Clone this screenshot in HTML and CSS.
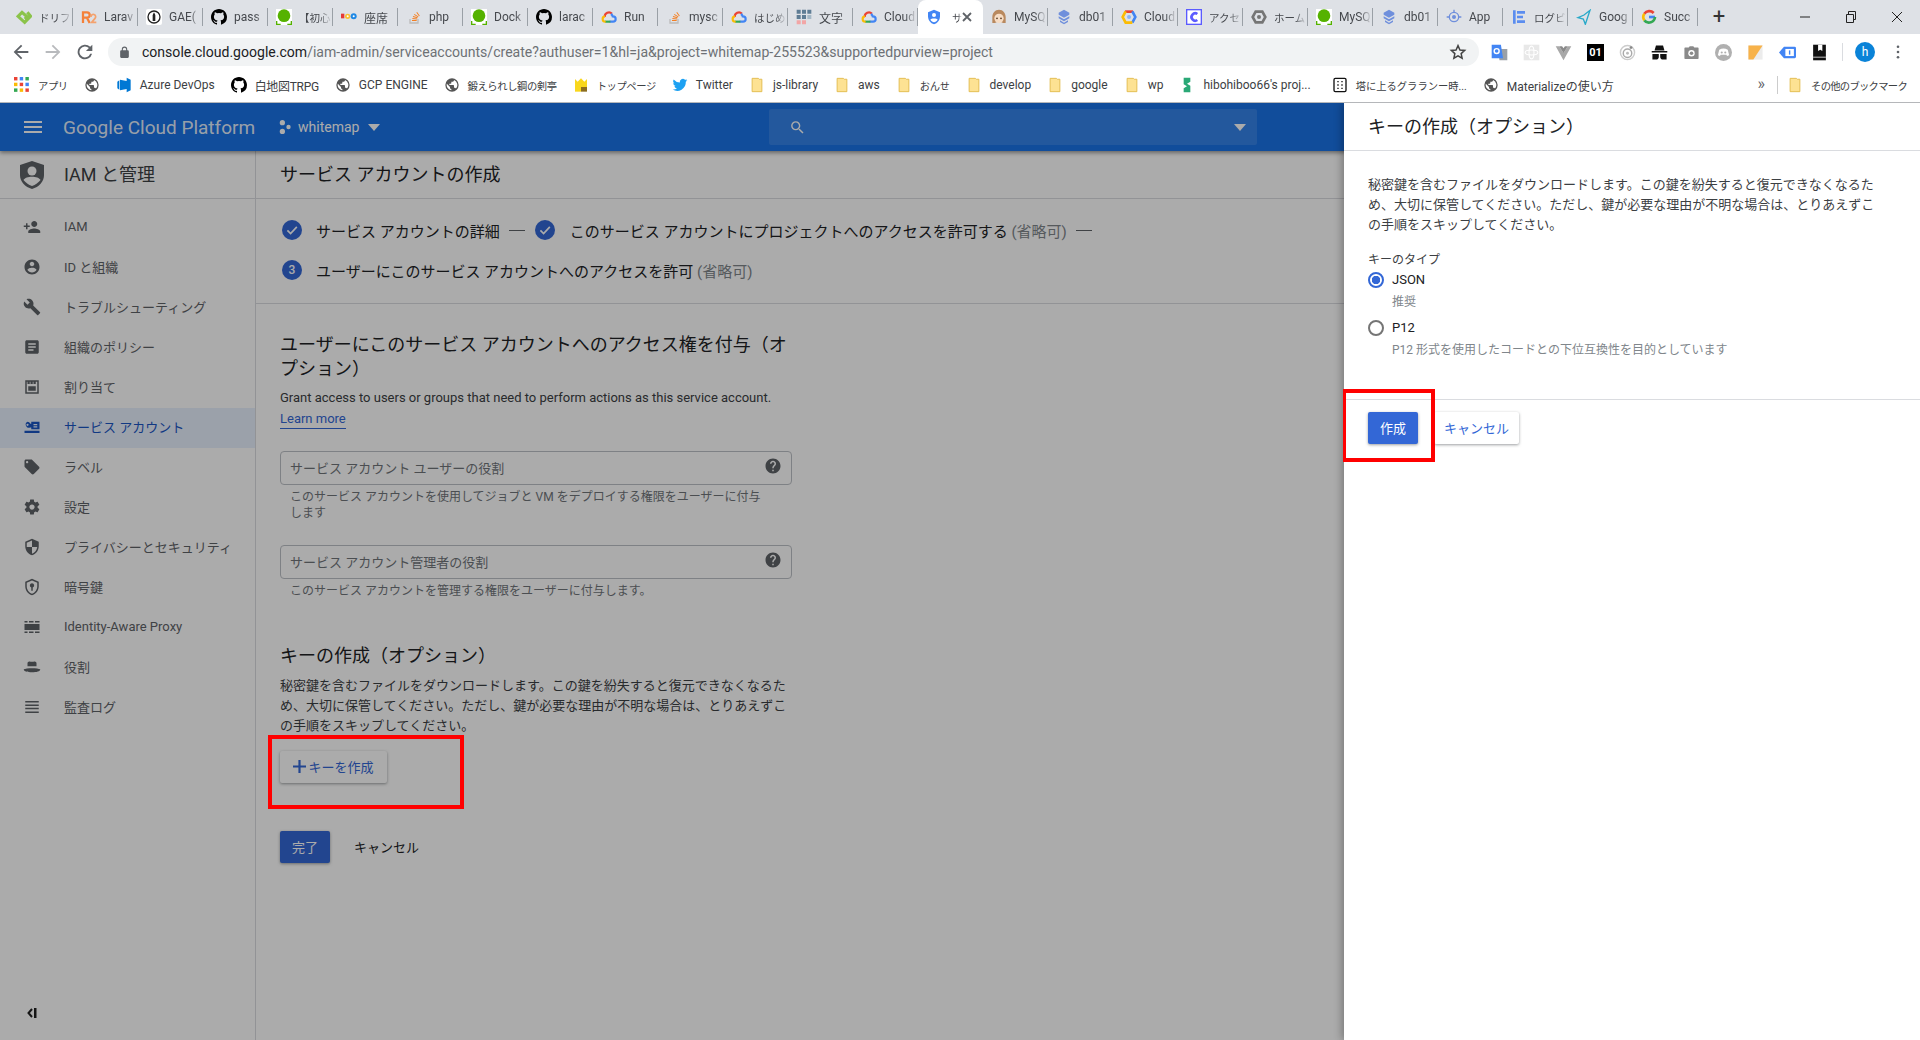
FILE: index.html
```html
<!DOCTYPE html>
<html lang="ja">
<head>
    <meta charset="UTF-8">
    <meta name="viewport" content="width=device-width, initial-scale=1.0">
    <title>サービス アカウントの作成</title>
    <link rel="stylesheet" href="styles.css">
</head>
<body>
    <svg class="defs" width="0" height="0">
        <symbol id="i-globe" viewBox="0 0 24 24"><path d="M12 2a10 10 0 1 0 0 20 10 10 0 0 0 0-20zM11 19.900A8 8 0 0 1 4.200 10.200L9 15v1a2 2 0 0 0 2 2zm6.900-2.500A2 2 0 0 0 16 16h-1v-3a1 1 0 0 0-1-1H8v-2h2a1 1 0 0 0 1-1V7h2a2 2 0 0 0 2-2v-.4a8 8 0 0 1 2.900 12.800z"/></symbol>
        <symbol id="i-github" viewBox="0 0 16 16"><path d="M8 0C3.580 0 0 3.580 0 8c0 3.540 2.290 6.530 5.470 7.590.4.070.55-.17.55-.38v-1.340c-2.230.48-2.700-1.070-2.700-1.070-.36-.92-.89-1.170-.89-1.170-.73-.5.050-.49.050-.49.800.060 1.230.830 1.230.830.710 1.220 1.870.870 2.330.660.070-.520.280-.870.510-1.070-1.780-.200-3.640-.890-3.640-3.950 0-.870.310-1.590.820-2.150-.080-.200-.360-1.020.080-2.120 0 0 .670-.210 2.200.820a7.600 7.600 0 0 1 4 0c1.530-1.040 2.200-.820 2.200-.820.440 1.100.160 1.920.080 2.120.510.560.820 1.270.820 2.150 0 3.070-1.870 3.750-3.650 3.950.290.250.540.730.540 1.480v2.200c0 .210.150.460.550.380A8 8 0 0 0 16 8c0-4.420-3.580-8-8-8z"/></symbol>
        <symbol id="i-cloud" viewBox="0 0 24 24"><g fill="none" stroke-width="3.200"><path stroke="#ea4335" d="M5.500 12A6.500 6.500 0 0 1 16.500 7"/><path stroke="#4285f4" d="M15 7.500A6 6 0 0 1 17.500 11H18a4 4 0 0 1 0 8h-5"/><path stroke="#34a853" d="M14 19H6"/><path stroke="#fbbc05" d="M7 19a4 4 0 0 1-1-8"/></g></symbol>
        <symbol id="i-hex" viewBox="0 0 24 24"><g fill="none" stroke-width="4"><path stroke="#ea4335" d="M6 4h12"/><path stroke="#4285f4" d="M17 3.500L21.500 12 17 20.500"/><path stroke="#fbbc05" d="M7 3.500L2.500 12 7 20.500h10"/></g><circle cx="12" cy="12" r="3" fill="#8ab4f8"/></symbol>
        <symbol id="i-qiita" viewBox="0 0 24 24"><path fill="#fff" d="M0 0h24v24H0z"/><circle cx="12" cy="10" r="9.500" fill="#55b200"/><path fill="#55b200" d="M0 18h2v4h5v2H0zM17 22h5v-4h2v6h-7z"/></symbol>
        <symbol id="i-stack" viewBox="0 0 24 24"><path fill="#bcbbbb" d="M5 15v7h14v-7h-2v5H7v-5z"/><path fill="#f48024" d="M9 18h7v-1.500H9zM9.500 15l7 .6.2-1.500-7-.7zM10.300 12l6.700 1.800.4-1.400-6.700-1.900zM12 8.800l6 3.500.700-1.200-6-3.500zM15.500 5.400l4 5.600 1.200-.8-4-5.600z"/></symbol>
        <symbol id="i-folder" viewBox="0 0 14 18"><path fill="#fde293" stroke="#e0b94a" d="M1.500 1.500h7l1 1h3v14h-11z"/></symbol>
        <symbol id="i-db" viewBox="0 0 24 24"><path fill="#6f8fdc" d="M12 1l8 4.500v3L12 13 4 8.500v-3zM4 11l8 4.500 8-4.500v3l-8 4.500L4 14zM6 17l6 3.500 6-3.500v2.500L12 23l-6-3.500z"/></symbol>
        <symbol id="i-help" viewBox="0 0 24 24"><path d="M12 2C6.480 2 2 6.480 2 12s4.480 10 10 10 10-4.480 10-10S17.520 2 12 2zm1 17h-2v-2h2v2zm2.070-7.750l-.9.920C13.450 12.900 13 13.500 13 15h-2v-.5c0-1.100.450-2.100 1.170-2.830l1.240-1.260c.370-.360.590-.860.590-1.410 0-1.100-.9-2-2-2s-2 .9-2 2H8c0-2.210 1.790-4 4-4s4 1.790 4 4c0 .880-.360 1.680-.930 2.250z"/></symbol>
        <symbol id="i-check" viewBox="0 0 24 24"><circle cx="12" cy="12" r="12" fill="#3367d6"/><path fill="none" stroke="#fff" stroke-width="2" d="M6.500 12.500l3.800 3.800 7.500-8"/></symbol>
    </svg>

    <div class="tab-strip">
        <div class="tab"><svg class="fav" viewBox="0 0 24 24"><path fill="none" stroke="#8bc34a" stroke-width="4.500" d="M17 5l5 6-9 9-10-9 6-6 8 7-4 3"/></svg><span class="tab-ja">ドリフ</span></div>
        <div class="tab"><svg class="fav" viewBox="0 0 24 24"><path fill="none" stroke="#f4813a" stroke-width="3.400" d="M3 21V5h6a4 4 0 0 1 0 8H3m6 0l4 8"/><path fill="none" stroke="#f4a26e" stroke-width="2.600" d="M15 12a3.500 3.500 0 1 1 6 2l-5 6h7"/></svg><span>Larav</span></div>
        <div class="tab"><svg class="fav" viewBox="0 0 24 24"><rect width="24" height="24" rx="3" fill="#fff"/><circle cx="12" cy="12" r="9" fill="none" stroke="#222" stroke-width="2"/><path fill="#222" d="M10 9l2-4 2 4v9h-4z"/></svg><span>GAE(</span></div>
        <div class="tab"><svg class="fav"><use href="#i-github"/></svg><span>pass</span></div>
        <div class="tab"><svg class="fav"><use href="#i-qiita"/></svg><span class="tab-ja">【初心</span></div>
        <div class="tab"><svg class="fav" viewBox="0 0 24 24"><path fill="#e53935" d="M0 7h5v7H0z"/><circle cx="10" cy="11" r="4" fill="#fbc02d"/><circle cx="19" cy="11" r="4.500" fill="#1e88e5"/><circle cx="10" cy="11" r="1.500" fill="#fff"/><circle cx="19" cy="11" r="1.500" fill="#fff"/></svg><span>座席</span></div>
        <div class="tab"><svg class="fav"><use href="#i-stack"/></svg><span>php</span></div>
        <div class="tab"><svg class="fav"><use href="#i-qiita"/></svg><span>Dock</span></div>
        <div class="tab"><svg class="fav"><use href="#i-github"/></svg><span>larac</span></div>
        <div class="tab"><svg class="fav"><use href="#i-cloud"/></svg><span>Run</span></div>
        <div class="tab"><svg class="fav"><use href="#i-stack"/></svg><span>mysc</span></div>
        <div class="tab"><svg class="fav"><use href="#i-cloud"/></svg><span class="tab-ja">はじめ</span></div>
        <div class="tab"><svg class="fav" viewBox="0 0 24 24"><path fill="#5f7d95" d="M1 1h6v6H1zM9 1h6v6H9zM17 1h6v6h-6zM1 9h6v6H1zM9 9h6v6H9z"/><path fill="#a5b8c6" d="M17 9h6v6h-6z"/><path fill="#f2a6a6" d="M1 17h6v6H1zM9 17h6v6H9z"/></svg><span>文字</span></div>
        <div class="tab"><svg class="fav"><use href="#i-cloud"/></svg><span>Cloud</span></div>
        <div class="tab tab-active"><svg class="fav" viewBox="0 0 24 24"><path fill="#4285f4" d="M12 1l9 4v6c0 5.500-3.800 10.700-9 12-5.200-1.300-9-6.500-9-12V5z"/><circle cx="12" cy="9" r="3" fill="#fff"/><path fill="#fff" d="M6.500 16c1-2.500 10-2.500 11 0-1.500 2-3.500 3.500-5.500 4-2-.5-4-2-5.500-4z"/></svg><span class="tab-ja">サ</span><svg class="tab-close" viewBox="0 0 10 10"><path d="M1 1l8 8M9 1L1 9"/></svg></div>
        <div class="tab"><svg class="fav" viewBox="0 0 24 24"><path fill="#b9895e" d="M12 1c6 0 10 5 10 11v9h-4l-6-3-6 3H2v-9C2 6 6 1 12 1z"/><circle cx="12" cy="14" r="7" fill="#f6dcc4"/><circle cx="9" cy="14" r="1.300" fill="#5a3a22"/><circle cx="15" cy="14" r="1.300" fill="#5a3a22"/></svg><span>MySQ</span></div>
        <div class="tab"><svg class="fav"><use href="#i-db"/></svg><span>db01</span></div>
        <div class="tab"><svg class="fav"><use href="#i-hex"/></svg><span>Cloud</span></div>
        <div class="tab"><svg class="fav" viewBox="0 0 24 24"><rect x="1" y="1" width="22" height="22" fill="#fff" stroke="#5b5bff" stroke-width="2"/><path fill="none" stroke="#5b5bff" stroke-width="4" d="M17 7.500a5.500 5.500 0 1 0 0 9"/></svg><span class="tab-ja">アクセ</span></div>
        <div class="tab"><svg class="fav" viewBox="0 0 24 24"><path fill="none" stroke="#757575" stroke-width="4" d="M7 4h10l4.500 8-4.500 8H7l-4.500-8z"/><circle cx="12" cy="12" r="3" fill="#757575"/></svg><span class="tab-ja">ホーム</span></div>
        <div class="tab"><svg class="fav"><use href="#i-qiita"/></svg><span>MySQ</span></div>
        <div class="tab"><svg class="fav"><use href="#i-db"/></svg><span>db01</span></div>
        <div class="tab"><svg class="fav" viewBox="0 0 24 24"><circle cx="12" cy="12" r="7" fill="none" stroke="#6f8fdc" stroke-width="2"/><circle cx="12" cy="12" r="3" fill="#6f8fdc"/><path fill="#6f8fdc" d="M11 1h2v5h-2zM1 11h4v2H1zM19 11h4v2h-4z"/></svg><span>App</span></div>
        <div class="tab"><svg class="fav" viewBox="0 0 24 24"><path fill="#5b8def" d="M3 2h4v20H3zM9 3h12v4H9zM9 10h9v4H9zM9 17h12v4H9z"/></svg><span class="tab-ja">ログビ</span></div>
        <div class="tab"><svg class="fav" viewBox="0 0 24 24"><path fill="none" stroke="#29a9c9" stroke-width="2" d="M21 2l-4 12-3 9-3-8-8-2 9-4z"/></svg><span>Goog</span></div>
        <div class="tab"><svg class="fav" viewBox="0 0 24 24"><path fill="none" stroke="#4285f4" stroke-width="4" d="M21 12h-9"/><path fill="none" stroke="#ea4335" stroke-width="4" d="M19 6a9 9 0 0 0-14 1"/><path fill="none" stroke="#fbbc05" stroke-width="4" d="M5 7a9 9 0 0 0 0 10"/><path fill="none" stroke="#34a853" stroke-width="4" d="M5 17a9 9 0 0 0 16-5"/></svg><span>Succ</span></div>
        <div class="tab-new">+</div>
        <div class="win-controls">
            <svg class="win-btn" viewBox="0 0 12 12"><path d="M1 6h10" stroke="#222"/></svg>
            <svg class="win-btn" viewBox="0 0 12 12"><path fill="none" stroke="#222" d="M1.500 3.500h7v8h-7zM3.500 3.500v-3h7v8h-2"/></svg>
            <svg class="win-btn" viewBox="0 0 12 12"><path stroke="#222" d="M1 1l10 10M11 1L1 11"/></svg>
        </div>
    </div>

    <div class="toolbar">
        <svg class="nav-btn" viewBox="0 0 24 24"><path fill="#5f6368" d="M20 11H7.800l5.600-5.600L12 4l-8 8 8 8 1.400-1.400L7.800 13H20z"/></svg>
        <svg class="nav-btn" viewBox="0 0 24 24"><path fill="#b8babd" d="M4 11h12.200l-5.600-5.600L12 4l8 8-8 8-1.400-1.400 5.600-5.600H4z"/></svg>
        <svg class="nav-btn" viewBox="0 0 24 24"><path fill="#5f6368" d="M17.650 6.350A8 8 0 1 0 19.730 14h-2.080a6 6 0 1 1-1.410-6.240L13 11h7V4z"/></svg>
        <div class="omnibox">
            <svg class="lock" viewBox="0 0 24 24"><path fill="#5f6368" d="M18 8h-1V6a5 5 0 0 0-10 0v2H6a2 2 0 0 0-2 2v10a2 2 0 0 0 2 2h12a2 2 0 0 0 2-2V10a2 2 0 0 0-2-2zM9 6a3 3 0 0 1 6 0v2H9z"/></svg>
            <span class="url"><b>console.cloud.google.com</b>/iam-admin/serviceaccounts/create?authuser=1&amp;hl=ja&amp;project=whitemap-255523&amp;supportedpurview=project</span>
            <svg class="star" viewBox="0 0 24 24"><path fill="none" stroke="#444" stroke-width="2" d="M12 3.500l2.600 5.800 6.300.6-4.700 4.200 1.300 6.200L12 17.100l-5.500 3.200 1.300-6.200-4.700-4.200 6.300-.6z"/></svg>
        </div>
        <div class="extensions">
            <svg class="ext" viewBox="0 0 24 24"><path fill="#9aa0a6" d="M10 7h13v16H12z"/><path fill="#4285f4" d="M1 1h13l3 19H1z"/><circle cx="8" cy="10" r="3.500" fill="none" stroke="#fff" stroke-width="2"/></svg>
            <svg class="ext" viewBox="0 0 24 24"><path fill="#e8e8e8" d="M1 1h22v22H1z"/><g fill="none" stroke="#fff" stroke-width="1.500"><ellipse cx="12" cy="12" rx="9" ry="3.500"/><ellipse cx="12" cy="12" rx="3.500" ry="9"/></g></svg>
            <svg class="ext" viewBox="0 0 24 24"><path fill="#a8a8a8" d="M1 3h5l6 10 6-10h5L12 23z"/><path fill="#8a8a8a" d="M6 3h4l2 3 2-3h4l-6 10z"/></svg>
            <div class="ext ext-01">01</div>
            <svg class="ext" viewBox="0 0 24 24"><circle cx="12" cy="12" r="10" fill="none" stroke="#ccc" stroke-width="2"/><circle cx="12" cy="13" r="6" fill="none" stroke="#aaa" stroke-width="2"/><circle cx="12" cy="13" r="2" fill="#bbb"/><circle cx="17" cy="5" r="2" fill="#888"/></svg>
            <svg class="ext" viewBox="0 0 24 24"><path fill="#111" d="M7 2h10l2 7H5zM1 10h22v2H1zM2 14h9v4a4 4 0 0 1-4 4H2zM13 14h9v8h-5a4 4 0 0 1-4-4z"/></svg>
            <svg class="ext" viewBox="0 0 24 24"><path fill="#8a8a8a" d="M8 5l1.500-2h5L16 5h5a1 1 0 0 1 1 1v14a1 1 0 0 1-1 1H3a1 1 0 0 1-1-1V6a1 1 0 0 1 1-1z"/><circle cx="12" cy="13" r="4.500" fill="#fff"/><circle cx="12" cy="13" r="2.500" fill="#8a8a8a"/></svg>
            <svg class="ext" viewBox="0 0 24 24"><circle cx="12" cy="12" r="12" fill="#b0b0b0"/><path fill="#fff" d="M6 8c4-2 8-2 12 0l2 8-3 1-1-2H8l-1 2-3-1z"/><circle cx="9.500" cy="12" r="1.500" fill="#b0b0b0"/><circle cx="14.500" cy="12" r="1.500" fill="#b0b0b0"/></svg>
            <svg class="ext" viewBox="0 0 24 24"><path fill="#ececec" d="M2 2h20v20H2z"/><path fill="#f7b24a" d="M2 2h20L9 22H2z"/></svg>
            <svg class="ext" viewBox="0 0 24 24"><path fill="#4285f4" d="M0 12l7-8h15a2 2 0 0 1 2 2v12a2 2 0 0 1-2 2H7z"/><rect x="9" y="7" width="12" height="10" fill="#fff"/><path fill="#4285f4" d="M14 9h2v6h-2z"/></svg>
            <svg class="ext" viewBox="0 0 24 24"><path fill="#111" d="M3 1h18v22H3z"/><path fill="#fff" d="M10 1h6v9l-3-2-3 2zM3 18h18v1H3z"/></svg>
            <div class="avatar">h</div>
            <svg class="menu-dots" viewBox="0 0 4 16"><circle cx="2" cy="2" r="1.500"/><circle cx="2" cy="8" r="1.500"/><circle cx="2" cy="14" r="1.500"/></svg>
        </div>
    </div>

    <div class="bookmarks">
        <div class="bm bm-ja"><svg class="bm-icon" viewBox="0 0 14 14"><path fill="#ea4335" d="M0 0h3v3H0z"/><path fill="#4285f4" d="M5 0h3v3H5z"/><path fill="#34a853" d="M10 0h3v3h-3z"/><path fill="#fbbc05" d="M0 5h3v3H0z"/><path fill="#ea4335" d="M5 5h3v3H5z"/><path fill="#4285f4" d="M10 5h3v3h-3z"/><path fill="#34a853" d="M0 10h3v3H0z"/><path fill="#fbbc05" d="M5 10h3v3H5z"/><path fill="#ea4335" d="M10 10h3v3h-3z"/></svg>アプリ</div>
        <div class="bm"><svg class="bm-icon bm-dark"><use href="#i-globe"/></svg></div>
        <div class="bm"><svg class="bm-icon" viewBox="0 0 24 24"><path fill="#0078d4" d="M16 1v5L6 4v16l10-2v5l6-3V4zM2 7l3-2v14l-3-2z"/></svg>Azure DevOps</div>
        <div class="bm bm-tight"><svg class="bm-icon"><use href="#i-github"/></svg>白地図TRPG</div>
        <div class="bm"><svg class="bm-icon bm-dark"><use href="#i-globe"/></svg>GCP ENGINE</div>
        <div class="bm bm-ja"><svg class="bm-icon bm-dark"><use href="#i-globe"/></svg>鍛えられし鋼の剣亭</div>
        <div class="bm bm-ja"><svg class="bm-icon" viewBox="0 0 24 24"><path fill="#f9d71c" d="M3 3l4 4 5-5 5 5 4-4v12H3z"/><path fill="#8d6e1f" d="M12 15h9v7h-9z"/><path fill="#f9d71c" d="M3 15h9v7H3z"/></svg>トップページ</div>
        <div class="bm"><svg class="bm-icon" viewBox="0 0 24 24"><path fill="#1da1f2" d="M23 5c-.8.400-1.700.600-2.600.700a4.500 4.500 0 0 0 2-2.500c-.9.500-1.900.900-2.900 1.100a4.500 4.500 0 0 0-7.700 4.100A12.800 12.800 0 0 1 2.500 3.700a4.500 4.500 0 0 0 1.400 6c-.7 0-1.400-.2-2-.6 0 2.200 1.500 4 3.600 4.500-.7.200-1.400.2-2 .1.600 1.800 2.200 3 4.200 3.100A9 9 0 0 1 1 18.700 12.800 12.800 0 0 0 20.700 7.300c.9-.6 1.700-1.400 2.300-2.300z"/></svg>Twitter</div>
        <div class="bm"><svg class="bm-icon"><use href="#i-folder"/></svg>js-library</div>
        <div class="bm"><svg class="bm-icon"><use href="#i-folder"/></svg>aws</div>
        <div class="bm bm-ja"><svg class="bm-icon"><use href="#i-folder"/></svg>おんせ</div>
        <div class="bm"><svg class="bm-icon"><use href="#i-folder"/></svg>develop</div>
        <div class="bm"><svg class="bm-icon"><use href="#i-folder"/></svg>google</div>
        <div class="bm"><svg class="bm-icon"><use href="#i-folder"/></svg>wp</div>
        <div class="bm"><svg class="bm-icon" viewBox="0 0 24 24"><path fill="#2aa876" d="M7 1h10v6l-5 3 5 3v10H7v-6l5-3-5-3z"/></svg>hibohiboo66's proj...</div>
        <div class="bm bm-ja bm-tower"><svg class="bm-icon" viewBox="0 0 24 24"><rect x="3" y="2" width="18" height="20" rx="2" fill="#fff" stroke="#111" stroke-width="2"/><path fill="#111" d="M8 6h2v2H8zM14 6h2v2h-2zM8 11h2v2H8zM14 11h2v2h-2zM8 16h2v2H8zM14 16h2v2h-2z"/></svg>塔に上るグラランー時...</div>
        <div class="bm"><svg class="bm-icon bm-dark"><use href="#i-globe"/></svg>Materializeの使い方</div>
        <div class="bm-more">»</div>
        <div class="bm bm-ja bm-other"><svg class="bm-icon"><use href="#i-folder"/></svg>その他のブックマーク</div>
    </div>

    <div class="app">
        <header class="gcp-header">
            <svg class="burger" viewBox="0 0 18 12"><path fill="#fff" d="M0 0h18v2H0zM0 5h18v2H0zM0 10h18v2H0z"/></svg>
            <div class="gcp-logo">Google Cloud Platform</div>
            <div class="project">
                <svg class="project-dots" viewBox="0 0 14 16"><circle cx="4" cy="3" r="3"/><circle cx="11" cy="8" r="2.500"/><circle cx="4" cy="13" r="3"/></svg>
                <span>whitemap</span>
                <i class="caret"></i>
            </div>
            <div class="search">
                <svg class="search-icon" viewBox="0 0 24 24"><path fill="#fff" d="M15.500 14h-.79l-.28-.27A6.470 6.470 0 0 0 16 9.500 6.500 6.500 0 1 0 9.500 16c1.610 0 3.090-.59 4.230-1.570l.27.28v.79l5 4.990L20.490 19l-4.990-5zm-6 0C7.010 14 5 11.990 5 9.500S7.010 5 9.500 5 14 7.010 14 9.500 11.990 14 9.500 14z"/></svg>
                <i class="caret"></i>
            </div>
        </header>

        <div class="app-body">
            <nav class="sidebar">
                <div class="side-title">
                    <svg class="side-logo" viewBox="0 0 24 28"><path fill="#5f6368" d="M12 0l12 4v10c0 6.500-5 12-12 14C5 26 0 20.500 0 14V4z"/><circle cx="12" cy="10" r="4.500" fill="#fff"/><path fill="#fff" d="M3.500 19c2-4.500 15-4.500 17 0-2 2.500-5 5-8.500 6-3.500-1-6.500-3.500-8.500-6z"/></svg>
                    <span>IAM と管理</span>
                </div>
                <ul class="side-list">
                    <li class="side-item"><svg class="side-icon" viewBox="0 0 24 24"><path d="M15 12c2.210 0 4-1.790 4-4s-1.790-4-4-4-4 1.790-4 4 1.790 4 4 4zm-9-2V7H4v3H1v2h3v3h2v-3h3v-2H6zm9 4c-2.670 0-8 1.340-8 4v2h16v-2c0-2.660-5.330-4-8-4z"/></svg>IAM</li>
                    <li class="side-item"><svg class="side-icon" viewBox="0 0 24 24"><path d="M12 2C6.480 2 2 6.480 2 12s4.480 10 10 10 10-4.480 10-10S17.520 2 12 2zm0 3c1.660 0 3 1.340 3 3s-1.340 3-3 3-3-1.340-3-3 1.340-3 3-3zm0 14.200c-2.500 0-4.710-1.280-6-3.220.030-1.990 4-3.080 6-3.080 1.990 0 5.970 1.090 6 3.080-1.290 1.940-3.500 3.220-6 3.220z"/></svg>ID と組織</li>
                    <li class="side-item"><svg class="side-icon" viewBox="0 0 24 24"><path d="M22.700 19l-9.100-9.100c.9-2.300.4-5-1.500-6.900-2-2-5-2.400-7.400-1.300L9 6 6 9 1.600 4.700C.4 7.100.9 10.100 2.900 12.100c1.900 1.900 4.600 2.400 6.900 1.500l9.100 9.100c.4.400 1 .4 1.400 0l2.300-2.300c.5-.4.500-1.100.1-1.400z"/></svg>トラブルシューティング</li>
                    <li class="side-item"><svg class="side-icon" viewBox="0 0 24 24"><path d="M19 3H5c-1.100 0-2 .9-2 2v14c0 1.100.9 2 2 2h14c1.100 0 2-.9 2-2V5c0-1.100-.9-2-2-2zm-5 14H7v-2h7v2zm3-4H7v-2h10v2zm0-4H7V7h10v2z"/></svg>組織のポリシー</li>
                    <li class="side-item"><svg class="side-icon" viewBox="0 0 24 24"><path fill-rule="evenodd" d="M3 3h18v18H3zM5 5v14h14V5h-2v3h-3V5h-1v3h-3V5h-1v3H6V5zM7 11h10v6H7z"/></svg>割り当て</li>
                    <li class="side-item side-active"><svg class="side-icon" viewBox="0 0 24 24"><path fill-rule="evenodd" d="M6 5a4 4 0 0 1 3.700 2.500H11V5h11v10H11v-2.500H9.700A4 4 0 1 1 6 5zm0 2.500a1.500 1.500 0 1 0 0 3 1.500 1.500 0 0 0 0-3zM14 8v1.500h5V8zM14 11v1.500h5V11zM2 17h20v3H2z"/></svg>サービス アカウント</li>
                    <li class="side-item"><svg class="side-icon" viewBox="0 0 24 24"><path d="M21.410 11.580l-9-9C12.050 2.220 11.550 2 11 2H4c-1.100 0-2 .9-2 2v7c0 .550.220 1.050.590 1.420l9 9c.360.360.860.580 1.410.580.550 0 1.050-.220 1.410-.590l7-7c.370-.360.590-.860.590-1.410 0-.550-.230-1.060-.590-1.420zM5.500 7C4.670 7 4 6.330 4 5.500S4.670 4 5.500 4 7 4.670 7 5.500 6.330 7 5.500 7z"/></svg>ラベル</li>
                    <li class="side-item"><svg class="side-icon" viewBox="0 0 24 24"><path d="M19.430 12.980c.040-.320.070-.640.070-.980s-.030-.660-.070-.980l2.110-1.650c.190-.150.240-.420.120-.640l-2-3.460c-.120-.220-.390-.300-.610-.220l-2.490 1c-.520-.4-1.080-.730-1.690-.980l-.380-2.650C14.460 2.180 14.250 2 14 2h-4c-.250 0-.460.180-.490.420l-.380 2.650c-.610.250-1.170.590-1.690.980l-2.490-1c-.230-.090-.490 0-.610.220l-2 3.460c-.130.220-.070.490.120.640l2.110 1.650c-.040.320-.070.650-.070.980s.030.660.070.980l-2.110 1.650c-.190.150-.240.420-.120.640l2 3.460c.120.220.390.300.610.220l2.490-1c.520.400 1.080.730 1.690.980l.380 2.650c.030.240.240.420.490.420h4c.250 0 .460-.180.490-.42l.380-2.650c.610-.250 1.170-.590 1.690-.980l2.490 1c.230.090.490 0 .610-.220l2-3.460c.120-.220.070-.490-.120-.640l-2.110-1.650zM12 15.500c-1.930 0-3.500-1.570-3.500-3.500s1.570-3.500 3.500-3.500 3.500 1.570 3.500 3.500-1.570 3.500-3.500 3.500z"/></svg>設定</li>
                    <li class="side-item"><svg class="side-icon" viewBox="0 0 24 24"><path d="M12 1L3 5v6c0 5.550 3.840 10.740 9 12 5.160-1.260 9-6.450 9-12V5l-9-4zm0 10.990h7c-.530 4.120-3.280 7.790-7 8.940V12H5V6.300l7-3.110v8.800z"/></svg>プライバシーとセキュリティ</li>
                    <li class="side-item"><svg class="side-icon" viewBox="0 0 24 24"><path fill-rule="evenodd" d="M12 1L3 5v6c0 5.550 3.840 10.740 9 12 5.160-1.260 9-6.450 9-12V5zm0 2.200L19 6.300V11c0 4.500-3 8.800-7 10-4-1.200-7-5.500-7-10V6.300zM12 7a3 3 0 0 0-1 5.800V17h2v-4.200A3 3 0 0 0 12 7z"/></svg>暗号鍵</li>
                    <li class="side-item"><svg class="side-icon" viewBox="0 0 24 24"><path d="M2 4h4v2H2zM8 4h6v2H8zM16 4h6v2h-6zM2 8h20v8H2zM2 18h4v2H2zM8 18h6v2H8zM16 18h6v2h-6z"/></svg>Identity-Aware Proxy</li>
                    <li class="side-item"><svg class="side-icon" viewBox="0 0 24 24"><path d="M6 7c0-2 2-3 4-2h4c2-1 4 0 4 2v4H6zM1 15c3-2 19-2 22 0 0 3-5 4-11 4S1 18 1 15z"/></svg>役割</li>
                    <li class="side-item"><svg class="side-icon" viewBox="0 0 24 24"><path d="M3 4h18v2H3zM3 8.500h18v2H3zM3 13h18v2H3zM3 18h18v2H3z"/></svg>監査ログ</li>
                </ul>
                <div class="side-collapse">
                    <svg class="collapse-icon" viewBox="0 0 10 10"><path fill="none" stroke="#222" stroke-width="2" d="M5 1L1.500 5 5 9"/><path fill="#222" d="M7 0h2.500v10H7z"/></svg>
                </div>
            </nav>

            <main class="main">
                <h1 class="page-title">サービス アカウントの作成</h1>
                <div class="steps">
                    <div class="step-row">
                        <svg class="step-icon"><use href="#i-check"/></svg>
                        <span>サービス アカウントの詳細</span>
                        <i class="step-dash"></i>
                        <svg class="step-icon"><use href="#i-check"/></svg>
                        <span class="step-gap">このサービス アカウントにプロジェクトへのアクセスを許可する <em>(省略可)</em></span>
                        <i class="step-dash"></i>
                    </div>
                    <div class="step-row">
                        <div class="step-icon step-num">3</div>
                        <span>ユーザーにこのサービス アカウントへのアクセスを許可 <em>(省略可)</em></span>
                    </div>
                </div>
                <section class="form">
                    <h2 class="form-head">ユーザーにこのサービス アカウントへのアクセス権を付与（オプション）</h2>
                    <p class="form-text">Grant access to users or groups that need to perform actions as this service account.</p>
                    <a class="learn">Learn more</a>
                    <div class="field field-first">
                        <span>サービス アカウント ユーザーの役割</span>
                        <svg class="field-help"><use href="#i-help"/></svg>
                    </div>
                    <p class="field-hint">このサービス アカウントを使用してジョブと VM をデプロイする権限をユーザーに付与します</p>
                    <div class="field field-second">
                        <span>サービス アカウント管理者の役割</span>
                        <svg class="field-help"><use href="#i-help"/></svg>
                    </div>
                    <p class="field-hint">このサービス アカウントを管理する権限をユーザーに付与します。</p>
                    <h2 class="form-head key-head">キーの作成（オプション）</h2>
                    <p class="form-text key-text">秘密鍵を含むファイルをダウンロードします。この鍵を紛失すると復元できなくなるため、大切に保管してください。ただし、鍵が必要な理由が不明な場合は、とりあえずこの手順をスキップしてください。</p>
                    <button class="btn btn-add"><svg class="plus" viewBox="0 0 12 12"><path d="M5 0h2v5h5v2H7v5H5V7H0V5h5z"/></svg>キーを作成</button>
                    <div class="form-actions">
                        <button class="btn btn-primary">完了</button>
                        <button class="btn btn-flat">キャンセル</button>
                    </div>
                </section>
            </main>
        </div>

        <div class="scrim"></div>

        <aside class="panel">
            <h2 class="panel-title">キーの作成（オプション）</h2>
            <div class="panel-body">
                <p class="panel-text">秘密鍵を含むファイルをダウンロードします。この鍵を紛失すると復元できなくなるため、大切に保管してください。ただし、鍵が必要な理由が不明な場合は、とりあえずこの手順をスキップしてください。</p>
                <div class="key-label">キーのタイプ</div>
                <div class="radio-row"><i class="radio radio-on"></i><span>JSON</span></div>
                <p class="radio-hint">推奨</p>
                <div class="radio-row radio-second"><i class="radio"></i><span>P12</span></div>
                <p class="radio-hint">P12 形式を使用したコードとの下位互換性を目的としています</p>
            </div>
            <div class="panel-actions">
                <button class="btn panel-create">作成</button>
                <button class="btn panel-cancel">キャンセル</button>
            </div>
        </aside>

        <!-- red boxes drawn on top of the screenshot -->
        <div class="mark mark-add"></div>
        <div class="mark mark-create"></div>
    </div>
</body>
</html>
```

FILE: styles.css
```css
* {
    margin: 0;
    padding: 0;
    box-sizing: border-box;
}

body {
    width: 1920px;
    height: 1040px;
    overflow: hidden;
    background: #fff;
    font-family: Roboto, "Noto Sans CJK JP", sans-serif;
    color: #202124;
}

.defs {
    position: absolute;
}

/* browser chrome */
.tab-strip {
    height: 34px;
    background: #dee1e6;
    display: flex;
    align-items: center;
    padding-left: 8px;
    font-size: 12px;
}

.tab {
    width: 65px;
    height: 34px;
    flex: none;
    display: flex;
    align-items: center;
    gap: 7px;
    padding-left: 8px;
    color: #45484d;
    position: relative;
    white-space: nowrap;
}

.tab::after {
    content: "";
    position: absolute;
    right: 0;
    top: 8px;
    height: 18px;
    width: 1px;
    background: #9aa0a6;
}

.tab span {
    width: 33px;
    -webkit-mask-image: linear-gradient(to right, #000 62%, transparent);
    mask-image: linear-gradient(to right, #000 62%, transparent);
}

.tab .tab-ja {
    font-size: 10.5px;
}

.tab-active {
    background: #fff;
    border-radius: 8px 8px 0 0;
}

.tab-active::after {
    display: none;
}

.tab-active span {
    width: 10px;
    margin-left: 3px;
}

.tab-close {
    position: absolute;
    left: 44px;
    top: 12px;
    width: 10px;
    height: 10px;
    fill: none;
    stroke: #5f6368;
    stroke-width: 1.800;
}

.fav {
    width: 16px;
    height: 16px;
    flex: none;
}

.tab-new {
    width: 30px;
    margin-left: 6px;
    text-align: center;
    font-size: 22px;
    line-height: 34px;
    color: #333;
}

.win-controls {
    margin-left: auto;
    display: flex;
    gap: 34px;
    padding-right: 17px;
}

.win-btn {
    width: 12px;
    height: 12px;
}

.toolbar {
    height: 34px;
    display: flex;
    align-items: center;
    padding: 2px 0 0 10px;
    background: #fff;
}

.nav-btn {
    width: 22px;
    height: 22px;
    margin-right: 10px;
    flex: none;
}

.omnibox {
    width: 1371px;
    height: 28px;
    margin-left: 2px;
    border-radius: 14px;
    background: #f1f3f4;
    display: flex;
    align-items: center;
    padding: 0 12px 0 10px;
    font-size: 14.05px;
    color: #6d7175;
}

.omnibox b {
    font-weight: 400;
    color: #202124;
}

.lock {
    width: 13px;
    height: 13px;
    margin-right: 11px;
}

.star {
    width: 18px;
    height: 18px;
    margin-left: auto;
}

.extensions {
    display: flex;
    align-items: center;
    padding-left: 12px;
    gap: 15px;
}

.ext {
    width: 17px;
    height: 17px;
    flex: none;
}

.ext-01 {
    background: #000;
    color: #fff;
    font-size: 11px;
    font-weight: 700;
    line-height: 17px;
    text-align: center;
}

.avatar {
    width: 20px;
    height: 20px;
    border-radius: 50%;
    background: #0a83d8;
    color: #fff;
    font-size: 12px;
    line-height: 20px;
    text-align: center;
    margin-left: 12px;
    position: relative;
}

/* thin divider left of the profile button */
.avatar::before {
    content: "";
    position: absolute;
    left: -13px;
    top: 1px;
    width: 1px;
    height: 18px;
    background: #dadce0;
}

.menu-dots {
    width: 4px;
    height: 14px;
    fill: #5f6368;
    margin-left: 6px;
}

.bookmarks {
    height: 35px;
    border-bottom: 1px solid #b5b7ba;
    display: flex;
    align-items: center;
    padding-left: 14px;
    gap: 16px;
    font-size: 12px;
    color: #3c4043;
    white-space: nowrap;
}

.bm {
    display: flex;
    align-items: center;
    gap: 8px;
}

.bm-ja {
    font-size: 10.300px;
    letter-spacing: -0.4px;
}

.bm-tight {
    letter-spacing: -0.3px;
}

.bm-tower {
    margin-left: 5px;
    letter-spacing: 0;
}

.bm-icon {
    width: 16px;
    height: 16px;
    flex: none;
}

.bm-dark {
    fill: #555;
}

.bm-more {
    margin-left: auto;
    font-size: 16px;
    color: #5f6368;
    padding-right: 12px;
    border-right: 1px solid #ccc;
    height: 18px;
    line-height: 16px;
}

.bm-other {
    margin-left: -7px;
    padding-right: 13px;
    letter-spacing: -0.7px;
}

/* cloud console */
.app {
    height: 937px;
    position: relative;
    overflow: hidden;
}

.gcp-header {
    height: 48px;
    background: #1a73e8;
    display: flex;
    align-items: center;
    padding-left: 24px;
    color: #fff;
    box-shadow: 0 2px 4px rgba(0, 0, 0, 0.4);
    position: relative;
}

.burger {
    width: 18px;
    height: 12px;
}

.gcp-logo {
    margin-left: 21px;
    width: 193px;
    font-size: 19px;
    color: rgba(255, 255, 255, 0.9);
    white-space: nowrap;
}

.project {
    margin-left: 22px;
    display: flex;
    align-items: center;
    font-size: 14px;
    width: 491px;
}

.project-dots {
    width: 14px;
    height: 14px;
    fill: #fff;
    margin-right: 6px;
}

.caret {
    width: 0;
    height: 0;
    border: 6px solid transparent;
    border-top: 7px solid #fff;
    border-bottom: 0;
}

.project .caret {
    margin-left: 9px;
}

.search {
    width: 488px;
    height: 36px;
    background: rgba(255, 255, 255, 0.12);
    border-radius: 2px;
    display: flex;
    align-items: center;
    justify-content: space-between;
    padding: 0 11px 0 20px;
}

.search-icon {
    width: 17px;
    height: 17px;
}

.app-body {
    height: 889px;
    display: flex;
}

.sidebar {
    width: 256px;
    flex: none;
    border-right: 1px solid #dadce0;
    display: flex;
    flex-direction: column;
}

.side-title {
    height: 48px;
    border-bottom: 1px solid #dadce0;
    display: flex;
    align-items: center;
    padding-left: 20px;
    font-size: 18px;
    color: #3c4043;
}

.side-title span {
    margin-bottom: 4px;
}

.side-logo {
    width: 24px;
    height: 28px;
    margin-right: 20px;
}

.side-list {
    list-style: none;
    padding-top: 9px;
}

.side-item {
    height: 40px;
    display: flex;
    align-items: center;
    font-size: 13px;
    color: #5f6368;
    padding: 0 0 3px 23px;
    white-space: nowrap;
}

.side-icon {
    width: 18px;
    height: 18px;
    margin-right: 23px;
    fill: #5f6368;
}

.side-active {
    background: #e8f0fe;
    color: #1a56c4;
}

.side-active .side-icon {
    fill: #1a56c4;
}

.side-collapse {
    margin-top: auto;
    padding: 0 0 22px 27px;
    line-height: 0;
}

.collapse-icon {
    width: 10px;
    height: 10px;
}

.main {
    flex: 1;
}

.page-title {
    height: 48px;
    border-bottom: 1px solid #dadce0;
    padding-left: 24px;
    font-size: 18px;
    font-weight: 400;
    line-height: 47px;
}

.steps {
    height: 105px;
    border-bottom: 1px solid #dadce0;
    padding: 11px 0 0 26px;
    font-size: 15px;
}

.step-row {
    height: 40px;
    display: flex;
    align-items: center;
}

.step-row em {
    font-style: normal;
    color: #80868b;
}

.step-icon {
    width: 20px;
    height: 20px;
    margin-right: 14px;
    flex: none;
}

.step-num {
    border-radius: 50%;
    background: #3367d6;
    color: #fff;
    font-size: 12px;
    font-weight: 500;
    line-height: 20px;
    text-align: center;
}

.step-gap {
    margin-left: 1px;
}

.step-dash {
    width: 16px;
    height: 1px;
    background: #5f6368;
    margin: 0 10px 0 9px;
}

.form {
    width: 535px;
    padding: 29px 0 0 24px;
}

.form-head {
    font-size: 18px;
    font-weight: 400;
    line-height: 24px;
}

.form-text {
    font-size: 13px;
    line-height: 20px;
    margin-top: 7px;
    color: #3c4043;
}

.learn {
    display: inline-block;
    font-size: 13px;
    line-height: 18px;
    color: #3367d6;
    border-bottom: 1px solid #3367d6;
}

.field {
    width: 512px;
    height: 34px;
    border: 1px solid #bdc1c6;
    border-radius: 4px;
    display: flex;
    align-items: center;
    justify-content: space-between;
    padding: 0 9px 2px 9px;
    font-size: 13px;
    color: #70757a;
}

.field-first {
    margin-top: 22px;
}

.field-second {
    margin-top: 24px;
}

.field-help {
    width: 18px;
    height: 18px;
    fill: #5f6368;
    margin-top: -3px;
}

.field-hint {
    font-size: 12px;
    line-height: 16px;
    color: #70757a;
    padding: 4px 20px 0 10px;
    width: 512px;
}

.key-head {
    margin-top: 45px;
}

.key-text {
    width: 512px;
    margin-top: 8px;
}

.btn {
    font-family: inherit;
    font-size: 13px;
    border: none;
    border-radius: 2px;
    height: 32px;
    padding-bottom: 2px;
    background: #fff;
}

.btn-add {
    width: 107px;
    margin-top: 15px;
    color: #3367d6;
    display: flex;
    align-items: center;
    justify-content: center;
    gap: 2px;
    box-shadow: 0 1px 3px rgba(60, 64, 67, 0.5);
}

.plus {
    width: 13px;
    height: 13px;
    fill: #3367d6;
}

.form-actions {
    margin-top: 48px;
    display: flex;
    align-items: center;
}

.btn-primary {
    width: 50px;
    background: #3367d6;
    color: #fff;
    box-shadow: 0 1px 3px rgba(60, 64, 67, 0.5);
}

.btn-flat {
    background: none;
    color: #202124;
    margin-left: 24px;
}

.scrim {
    position: absolute;
    inset: 0;
    background: rgba(0, 0, 0, 0.33);
}

.panel {
    position: absolute;
    top: 0;
    right: 0;
    bottom: 0;
    width: 576px;
    background: #fff;
    box-shadow: -2px 0 8px rgba(0, 0, 0, 0.3);
}

.panel-title {
    height: 48px;
    border-bottom: 1px solid #dadce0;
    padding-left: 24px;
    font-size: 18px;
    font-weight: 400;
    line-height: 47px;
}

.panel-body {
    height: 249px;
    border-bottom: 1px solid #dadce0;
    padding: 24px 24px 0;
}

.panel-text {
    width: 512px;
    font-size: 13px;
    line-height: 20px;
    color: #3c4043;
}

.key-label {
    font-size: 12px;
    line-height: 16px;
    margin-top: 17px;
    color: #3c4043;
}

.radio-row {
    display: flex;
    align-items: center;
    gap: 8px;
    font-size: 13px;
    line-height: 20px;
    margin-top: 2px;
}

.radio-second {
    margin-top: 8px;
}

.radio {
    width: 16px;
    height: 16px;
    border-radius: 50%;
    border: 2px solid #757575;
}

.radio-on {
    border-color: #3367d6;
    background: radial-gradient(circle, #3367d6 0 4px, #fff 4.500px);
}

.radio-hint {
    font-size: 12px;
    line-height: 16px;
    color: #80868b;
    padding: 4px 0 0 24px;
}

.panel-actions {
    display: flex;
    gap: 16px;
    padding: 12px 0 0 24px;
}

.panel-create {
    width: 50px;
    background: #3367d6;
    color: #fff;
    box-shadow: 0 1px 3px rgba(60, 64, 67, 0.5);
}

.panel-cancel {
    width: 85px;
    color: #3367d6;
    box-shadow: 0 1px 3px rgba(60, 64, 67, 0.5);
}

.mark {
    position: absolute;
    border: 4px solid #f00;
}

.mark-add {
    left: 268px;
    top: 632px;
    width: 196px;
    height: 74px;
}

.mark-create {
    left: 1343px;
    top: 286px;
    width: 92px;
    height: 73px;
    border-left-width: 3px;
}
```
